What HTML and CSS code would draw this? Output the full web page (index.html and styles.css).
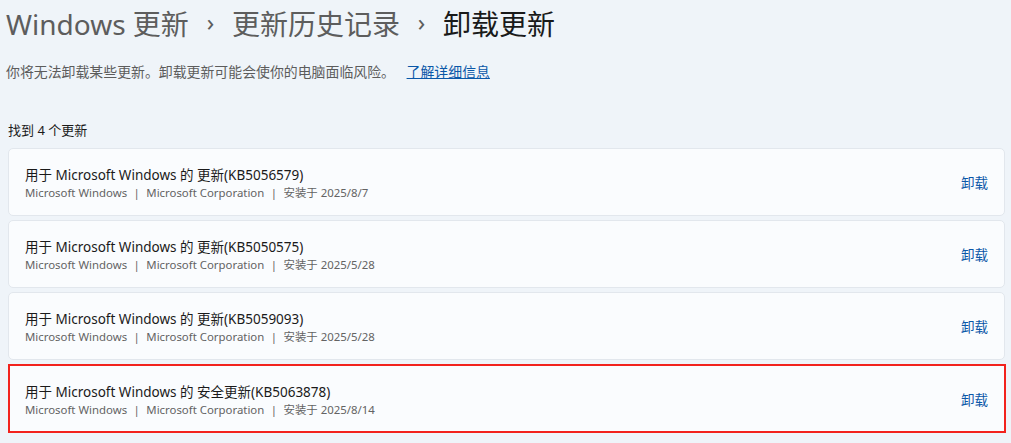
FILE: index.html
```html
<!DOCTYPE html>
<html lang="zh-CN">
<head>
<meta charset="utf-8">
<title>卸载更新</title>
<link rel="stylesheet" href="styles.css">
</head>
<body>
<main class="page">
  <h1 class="crumbs">
    <span class="crumb">Windows 更新</span>
    <span class="chev">›</span>
    <span class="crumb">更新历史记录</span>
    <span class="chev">›</span>
    <span class="crumb current">卸载更新</span>
  </h1>
  <p class="note">你将无法卸载某些更新。卸载更新可能会使你的电脑面临风险。 <a class="link" href="#">了解详细信息</a></p>
  <p class="count">找到 4 个更新</p>
  <ul class="list">
    <li class="card">
      <div class="info">
        <div class="name">用于 Microsoft Windows 的 更新(KB5056579)</div>
        <div class="meta">Microsoft Windows <span class="sep">|</span> Microsoft Corporation <span class="sep">|</span> 安装于 2025/8/7</div>
      </div>
      <a class="action" href="#">卸载</a>
    </li>
    <li class="card">
      <div class="info">
        <div class="name">用于 Microsoft Windows 的 更新(KB5050575)</div>
        <div class="meta">Microsoft Windows <span class="sep">|</span> Microsoft Corporation <span class="sep">|</span> 安装于 2025/5/28</div>
      </div>
      <a class="action" href="#">卸载</a>
    </li>
    <li class="card">
      <div class="info">
        <div class="name">用于 Microsoft Windows 的 更新(KB5059093)</div>
        <div class="meta">Microsoft Windows <span class="sep">|</span> Microsoft Corporation <span class="sep">|</span> 安装于 2025/5/28</div>
      </div>
      <a class="action" href="#">卸载</a>
    </li>
    <li class="card marked">
      <div class="info">
        <div class="name">用于 Microsoft Windows 的 安全更新(KB5063878)</div>
        <div class="meta">Microsoft Windows <span class="sep">|</span> Microsoft Corporation <span class="sep">|</span> 安装于 2025/8/14</div>
      </div>
      <a class="action" href="#">卸载</a>
    </li>
  </ul>
</main>
</body>
</html>
```

FILE: styles.css
```css
html, body {
  margin: 0;
  padding: 0;
  background: #eff4f9;
}
body {
  font-family: "Segoe UI", "Noto Sans", "Noto Sans CJK SC", sans-serif;
  color: #1b1b1b;
}
.page {
  padding: 5px 6px 0 8px;
}
.crumbs {
  margin: 0 0 0 -2px;
  font-size: 28px;
  font-weight: 400;
  line-height: 38px;
  display: flex;
  align-items: center;
  white-space: nowrap;
}
.crumb {
  color: #5d5d5d;
}
.crumb.current {
  color: #1a1a1a;
}
.chev {
  color: #5d5d5d;
  font-size: 24px;
  width: 43px;
  text-align: center;
  position: relative;
  top: -2px;
}
.note {
  margin: 19px 0 0 -2px;
  font-size: 13.9px;
  line-height: 20px;
  color: #5c5c5c;
}
.link {
  color: #0a57a8;
  text-decoration: underline;
  margin-left: 8px;
}
.count {
  margin: 38px 0 0 0;
  font-size: 13px;
  line-height: 20px;
  color: #1a1a1a;
}
.list {
  list-style: none;
  margin: 8px 0 0 0;
  padding: 0;
  display: flex;
  flex-direction: column;
  gap: 4px;
  width: 997px;
}
.card {
  box-sizing: border-box;
  height: 68px;
  background: #fafcfe;
  border: 1px solid #e2e7ed;
  border-radius: 5px;
  padding: 0 16px;
  display: flex;
  align-items: center;
  justify-content: space-between;
}
.card.marked {
  border: 2px solid #f2221d;
  border-radius: 0;
  padding: 0 16px 0 15px;
  height: 69px;
  width: 998px;
}
.info {
  display: flex;
  flex-direction: column;
  padding-top: 2px;
}
.name {
  font-size: 13.5px;
  line-height: 20px;
  color: #1a1a1a;
}
.meta {
  font-size: 11.4px;
  line-height: 16px;
  color: #636363;
}
.sep {
  margin: 0 3.5px;
}
.action {
  color: #0a57a8;
  font-size: 13.5px;
  text-decoration: none;
}
```
